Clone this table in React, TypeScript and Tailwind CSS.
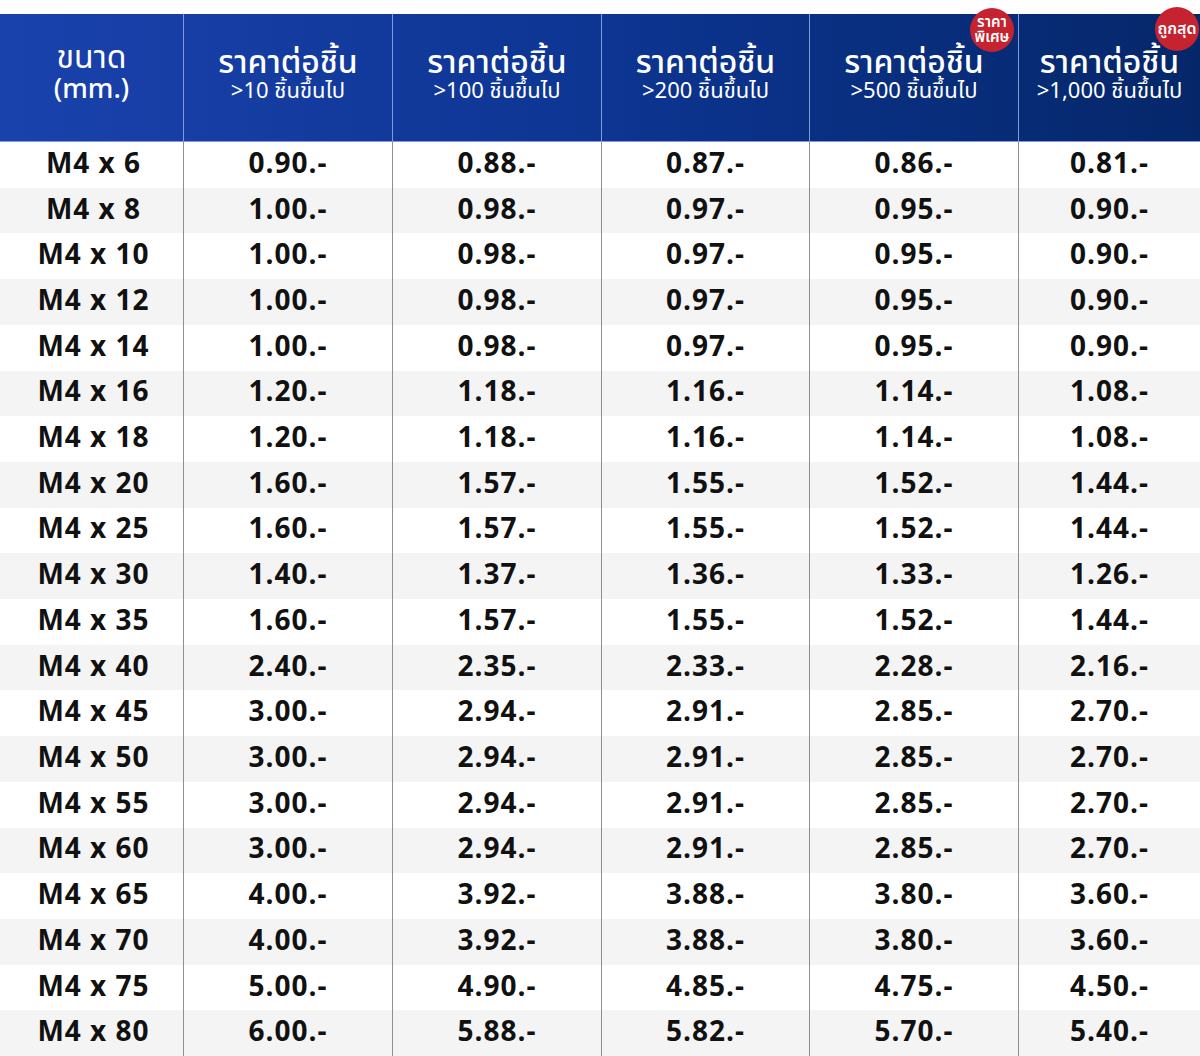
import React from "react";

// price rows: size, then price per tier
const rows: Array<[string, string[]]> = [
	["M4 x 6", ["0.90", "0.88", "0.87", "0.86", "0.81"]],
	["M4 x 8", ["1.00", "0.98", "0.97", "0.95", "0.90"]],
	["M4 x 10", ["1.00", "0.98", "0.97", "0.95", "0.90"]],
	["M4 x 12", ["1.00", "0.98", "0.97", "0.95", "0.90"]],
	["M4 x 14", ["1.00", "0.98", "0.97", "0.95", "0.90"]],
	["M4 x 16", ["1.20", "1.18", "1.16", "1.14", "1.08"]],
	["M4 x 18", ["1.20", "1.18", "1.16", "1.14", "1.08"]],
	["M4 x 20", ["1.60", "1.57", "1.55", "1.52", "1.44"]],
	["M4 x 25", ["1.60", "1.57", "1.55", "1.52", "1.44"]],
	["M4 x 30", ["1.40", "1.37", "1.36", "1.33", "1.26"]],
	["M4 x 35", ["1.60", "1.57", "1.55", "1.52", "1.44"]],
	["M4 x 40", ["2.40", "2.35", "2.33", "2.28", "2.16"]],
	["M4 x 45", ["3.00", "2.94", "2.91", "2.85", "2.70"]],
	["M4 x 50", ["3.00", "2.94", "2.91", "2.85", "2.70"]],
	["M4 x 55", ["3.00", "2.94", "2.91", "2.85", "2.70"]],
	["M4 x 60", ["3.00", "2.94", "2.91", "2.85", "2.70"]],
	["M4 x 65", ["4.00", "3.92", "3.88", "3.80", "3.60"]],
	["M4 x 70", ["4.00", "3.92", "3.88", "3.80", "3.60"]],
	["M4 x 75", ["5.00", "4.90", "4.85", "4.75", "4.50"]],
	["M4 x 80", ["6.00", "5.88", "5.82", "5.70", "5.40"]],
];

const tiers = [">10", ">100", ">200", ">500", ">1,000"];

const cols = "grid grid-cols-[184px_209px_209px_208px_209px_1fr]";

const Badge = ({ lines, className }: { lines: string[]; className: string }) => (
	<div
		className={`absolute w-[44px] h-[44px] rounded-full bg-[#c4232f] text-white font-semibold flex flex-col items-center justify-center ${className}`}
	>
		{lines.map((l) => (
			<span key={l} className="leading-[15px]">
				{l}
			</span>
		))}
	</div>
);

const App = () => {
	return (
		<div
			className="w-[1200px] h-[1056px] bg-white pt-[14px] flex flex-col overflow-hidden"
			style={{ fontFamily: '"Noto Sans Thai", "Noto Sans", sans-serif' }}
		>
			{/* Header */}
			<div
				className={`${cols} h-[128px] shrink-0 bg-gradient-to-r from-[#1a42ad] via-[#0d3592] to-[#05276a] text-white border-b border-[#7f9bd6]`}
			>
				<div className="flex flex-col items-center justify-center border-r border-[#7f9bd6] pb-[8px]">
					<span className="text-[32px] leading-[32px]">ขนาด</span>
					<span className="text-[27px] leading-[32px] font-medium">(mm.)</span>
				</div>
				{tiers.map((t, i) => (
					<div
						key={t}
						className={`relative flex flex-col items-center justify-center pb-[6px] ${
							i < 4 ? "border-r border-[#7f9bd6]" : ""
						}`}
					>
						<span className="text-[32px] leading-[34px] font-medium">ราคาต่อชิ้น</span>
						<span className="text-[22px] leading-[24px]">{t} ชิ้นขึ้นไป</span>
						{i === 3 && (
							<Badge lines={["ราคา", "พิเศษ"]} className="left-[160px] top-[-6px] text-[15px]" />
						)}
						{i === 4 && <Badge lines={["ถูกสุด"]} className="left-[136px] top-[-7px] text-[16px]" />}
					</div>
				))}
			</div>

			{/* Body */}
			<div className="flex-1 flex flex-col">
				{rows.map(([size, prices], r) => (
					<div
						key={size}
						className={`${cols} flex-1 ${r % 2 === 1 ? "bg-[#f4f4f4]" : "bg-white"} text-[#111] font-bold text-[28px] tracking-[1px]`}
					>
						<div className="flex items-center justify-center border-r border-[#8f8f8f] pl-[4px]">{size}</div>
						{prices.map((p, i) => (
							<div
								key={i}
								className={`flex items-center justify-center ${
									i < 4 ? "border-r border-[#8f8f8f]" : ""
								}`}
							>
								{p}.-
							</div>
						))}
					</div>
				))}
			</div>
		</div>
	);
};

export default App;
